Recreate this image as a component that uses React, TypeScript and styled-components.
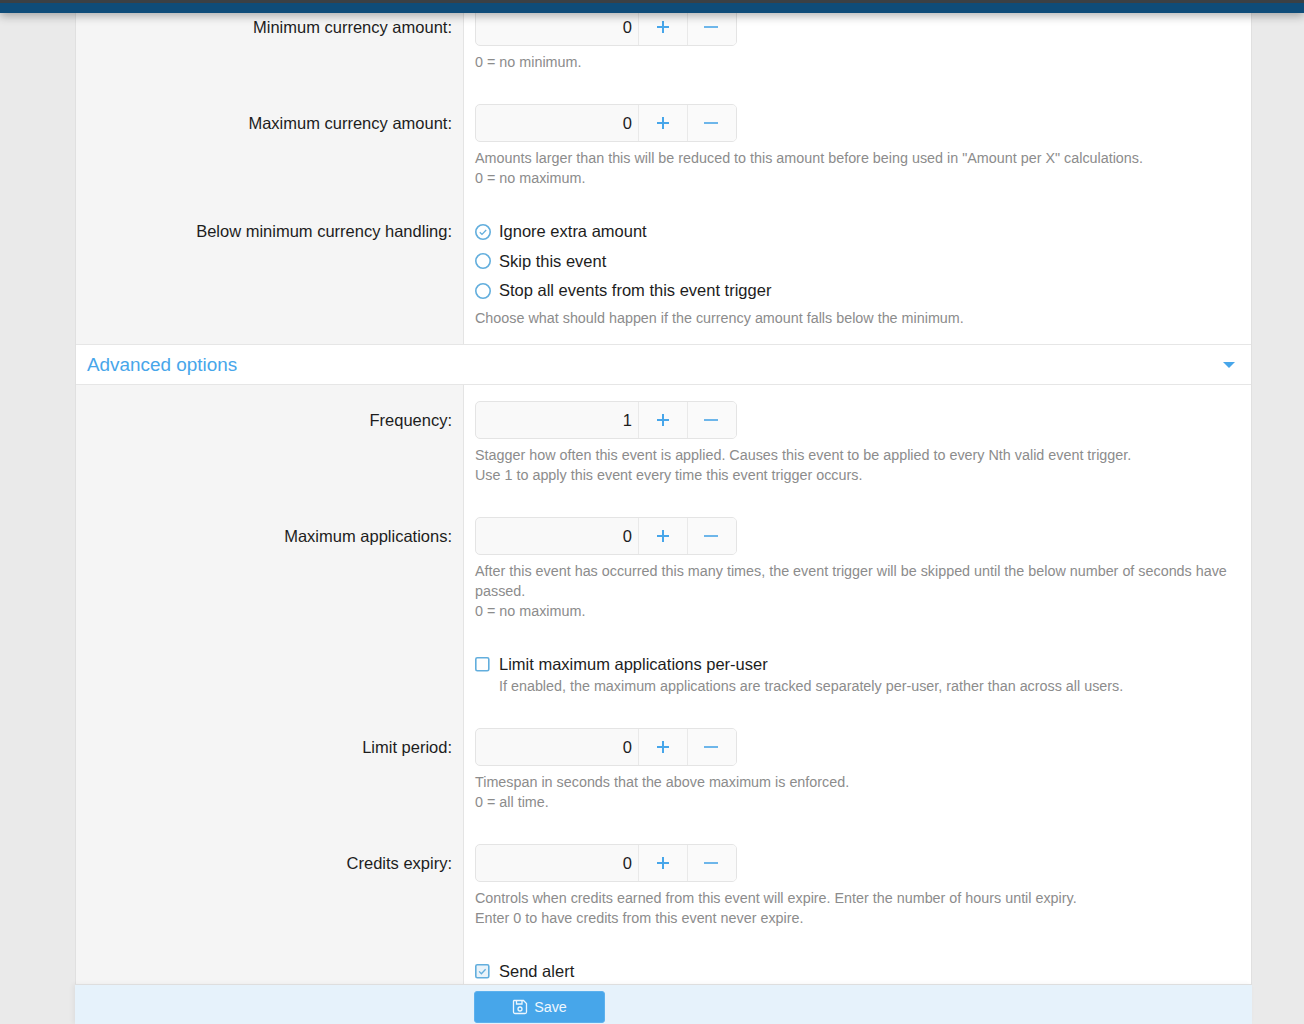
import React from "react";
import styled, { createGlobalStyle } from "styled-components";

const GlobalStyle = createGlobalStyle`
  html, body {
    margin: 0;
    height: 1024px;
    overflow: hidden;
    background: #eaeaea;
    font-family: "Liberation Sans", Arial, sans-serif;
    color: #1d1d1d;
  }
`;

const TopBar = styled.div`
  position: fixed;
  top: 0;
  left: 0;
  right: 0;
  height: 10px;
  background: #0f4c79;
  border-top: 3px solid #3b4045;
  box-shadow: 0 3px 10px rgba(0, 0, 0, 0.3);
  z-index: 5;
`;

const Page = styled.div`
  padding: 0 52px 0 75px;
`;

const Card = styled.div`
  margin-top: -8px;
  background: #fff;
  border-left: 1px solid #e0e0e0;
  border-right: 1px solid #e0e0e0;
  box-sizing: border-box;
`;

const Row = styled.div`
  display: grid;
  grid-template-columns: 388px 1fr;
`;

const Label = styled.div<{ $flat?: boolean }>`
  background: #f5f5f5;
  border-right: 1px solid #e4e4e4;
  padding: ${(p) => (p.$flat ? "16px" : "23px")} 11px 16px 0;
  text-align: right;
  font-size: 16.5px;
  line-height: ${(p) => (p.$flat ? "23px" : "24px")};
`;

const Field = styled.div`
  padding: 16px 11px 16px 11px;
  min-width: 0;
`;

const Stepper = styled.div`
  display: flex;
  width: 262px;
  height: 38px;
  box-sizing: border-box;
  border: 1px solid #e4e4e4;
  border-radius: 5px;
  background: #f9f9f9;
  overflow: hidden;
`;

const StepValue = styled.div`
  flex: 1;
  padding-right: 6px;
  text-align: right;
  font-size: 16.5px;
  line-height: 36px;
`;

const StepButton = styled.div`
  flex: none;
  width: 49px;
  box-sizing: border-box;
  display: flex;
  align-items: center;
  justify-content: center;
  border-left: 1px solid #e9e9e9;
  background: #fafafa;
  color: #47a6ea;
`;

const MinusGlyph = styled.svg`
  margin-right: 2px;
  color: #6db6ea;
`;

const Hint = styled.div<{ $tight?: boolean }>`
  margin-top: ${(p) => (p.$tight ? "0" : "6px")};
  font-size: 14.35px;
  line-height: 20px;
  color: #8c8c8c;
`;

const OptionList = styled.div`
  display: flex;
  flex-direction: column;
  gap: 6.5px;
`;

const Option = styled.div`
  display: flex;
  align-items: center;
  gap: 8px;
  font-size: 16.5px;
  line-height: 23px;
`;

const OptionHint = styled.div`
  padding-left: 24px;
`;

const IconSlot = styled.span`
  width: 16px;
  height: 16px;
  display: inline-flex;
  flex: none;
`;

const AdvancedHeader = styled.div`
  display: flex;
  align-items: center;
  justify-content: space-between;
  height: 39px;
  padding: 0 16px 0 11px;
  background: #fff;
  border-top: 1px solid #e6e6e6;
  border-bottom: 1px solid #e6e6e6;
  color: #47a6ea;
  font-size: 18.9px;
`;

const Caret = styled.span`
  width: 0;
  height: 0;
  border-left: 6px solid transparent;
  border-right: 6px solid transparent;
  border-top: 6px solid #47a6ea;
`;

const SaveBar = styled.div`
  position: fixed;
  left: 75px;
  bottom: 0;
  width: 1177px;
  height: 40px;
  box-sizing: border-box;
  padding: 6px 0 0 399px;
  background: #e6f2fb;
  border-top: 1px solid #dedede;
  box-shadow: -2px 0 5px rgba(0, 0, 0, 0.05);
  z-index: 4;
`;

const SaveButton = styled.button`
  display: flex;
  align-items: center;
  justify-content: center;
  gap: 6px;
  width: 131px;
  height: 32px;
  border: 1px solid #5cb1ee;
  border-radius: 3px;
  background: #47a6ea;
  color: #eef7fe;
  font-family: inherit;
  font-size: 14.35px;
`;

const PlusIcon = () => (
  <svg width="14" height="14" viewBox="0 0 14 14" fill="none" stroke="currentColor" strokeWidth="2">
    <path d="M7 1v12M1 7h12" />
  </svg>
);

const MinusIcon = () => (
  <MinusGlyph width="14" height="14" viewBox="0 0 14 14" fill="none" stroke="currentColor" strokeWidth="2">
    <path d="M0 7h14" />
  </MinusGlyph>
);

const RadioIcon = ({ checked }: { checked?: boolean }) => (
  <IconSlot>
    <svg width="16" height="16" viewBox="0 0 16 16" fill="none" stroke="#62aedd">
      <circle cx="8" cy="8" r="7.2" strokeWidth="1.6" />
      {checked && <path d="M4.8 8.2l2.2 2.2 4.2-4.4" strokeWidth="1.3" />}
    </svg>
  </IconSlot>
);

const CheckIcon = ({ checked }: { checked?: boolean }) => (
  <IconSlot>
    <svg width="16" height="16" viewBox="0 0 16 16" fill="none" stroke="#62aedd">
      <rect x="0.8" y="0.8" width="13" height="13" rx="1.5" strokeWidth="1.6" fill={checked ? "#e9f3fa" : "none"} />
      {checked && <path d="M4.1 7.4l2.3 2.4 4.2-4.6" strokeWidth="1.3" />}
    </svg>
  </IconSlot>
);

const Number = ({ value }: { value: number }) => (
  <Stepper>
    <StepValue>{value}</StepValue>
    <StepButton>
      <PlusIcon />
    </StepButton>
    <StepButton>
      <MinusIcon />
    </StepButton>
  </Stepper>
);

const NumberRow = ({
  label,
  value,
  hints,
}: {
  label: string;
  value: number;
  hints: string[];
}) => (
  <Row>
    <Label>{label}</Label>
    <Field>
      <Number value={value} />
      <Hint>
        {hints.map((h) => (
          <div key={h}>{h}</div>
        ))}
      </Hint>
    </Field>
  </Row>
);

export default function App() {
  return (
    <>
      <GlobalStyle />
      <TopBar />
      <Page>
        <Card>
          <NumberRow label="Minimum currency amount:" value={0} hints={["0 = no minimum."]} />
          <NumberRow
            label="Maximum currency amount:"
            value={0}
            hints={[
              'Amounts larger than this will be reduced to this amount before being used in "Amount per X" calculations.',
              "0 = no maximum.",
            ]}
          />
          <Row>
            <Label $flat>Below minimum currency handling:</Label>
            <Field>
              <OptionList>
                <Option>
                  <RadioIcon checked />
                  Ignore extra amount
                </Option>
                <Option>
                  <RadioIcon />
                  Skip this event
                </Option>
                <Option>
                  <RadioIcon />
                  Stop all events from this event trigger
                </Option>
              </OptionList>
              <Hint>Choose what should happen if the currency amount falls below the minimum.</Hint>
            </Field>
          </Row>
          <AdvancedHeader>
            Advanced options
            <Caret />
          </AdvancedHeader>
          <NumberRow
            label="Frequency:"
            value={1}
            hints={[
              "Stagger how often this event is applied. Causes this event to be applied to every Nth valid event trigger.",
              "Use 1 to apply this event every time this event trigger occurs.",
            ]}
          />
          <NumberRow
            label="Maximum applications:"
            value={0}
            hints={[
              "After this event has occurred this many times, the event trigger will be skipped until the below number of seconds have passed.",
              "0 = no maximum.",
            ]}
          />
          <Row>
            <Label />
            <Field>
              <Option>
                <CheckIcon />
                Limit maximum applications per-user
              </Option>
              <OptionHint>
                <Hint $tight>
                  If enabled, the maximum applications are tracked separately per-user, rather than across all users.
                </Hint>
              </OptionHint>
            </Field>
          </Row>
          <NumberRow
            label="Limit period:"
            value={0}
            hints={["Timespan in seconds that the above maximum is enforced.", "0 = all time."]}
          />
          <NumberRow
            label="Credits expiry:"
            value={0}
            hints={[
              "Controls when credits earned from this event will expire. Enter the number of hours until expiry.",
              "Enter 0 to have credits from this event never expire.",
            ]}
          />
          <Row>
            <Label />
            <Field>
              <Option>
                <CheckIcon checked />
                Send alert
              </Option>
            </Field>
          </Row>
        </Card>
      </Page>
      <SaveBar>
        <SaveButton>
          <svg width="16" height="16" viewBox="0 0 16 16" fill="none" stroke="currentColor" strokeWidth="1.3">
            <path d="M2 1.5h9.5L14.5 4.5V13a1.5 1.5 0 0 1-1.5 1.5H3A1.5 1.5 0 0 1 1.5 13V2z" />
            <path d="M4.5 1.5v3.5h5.5V1.5" />
            <circle cx="8" cy="10" r="2" />
          </svg>
          Save
        </SaveButton>
      </SaveBar>
    </>
  );
}
